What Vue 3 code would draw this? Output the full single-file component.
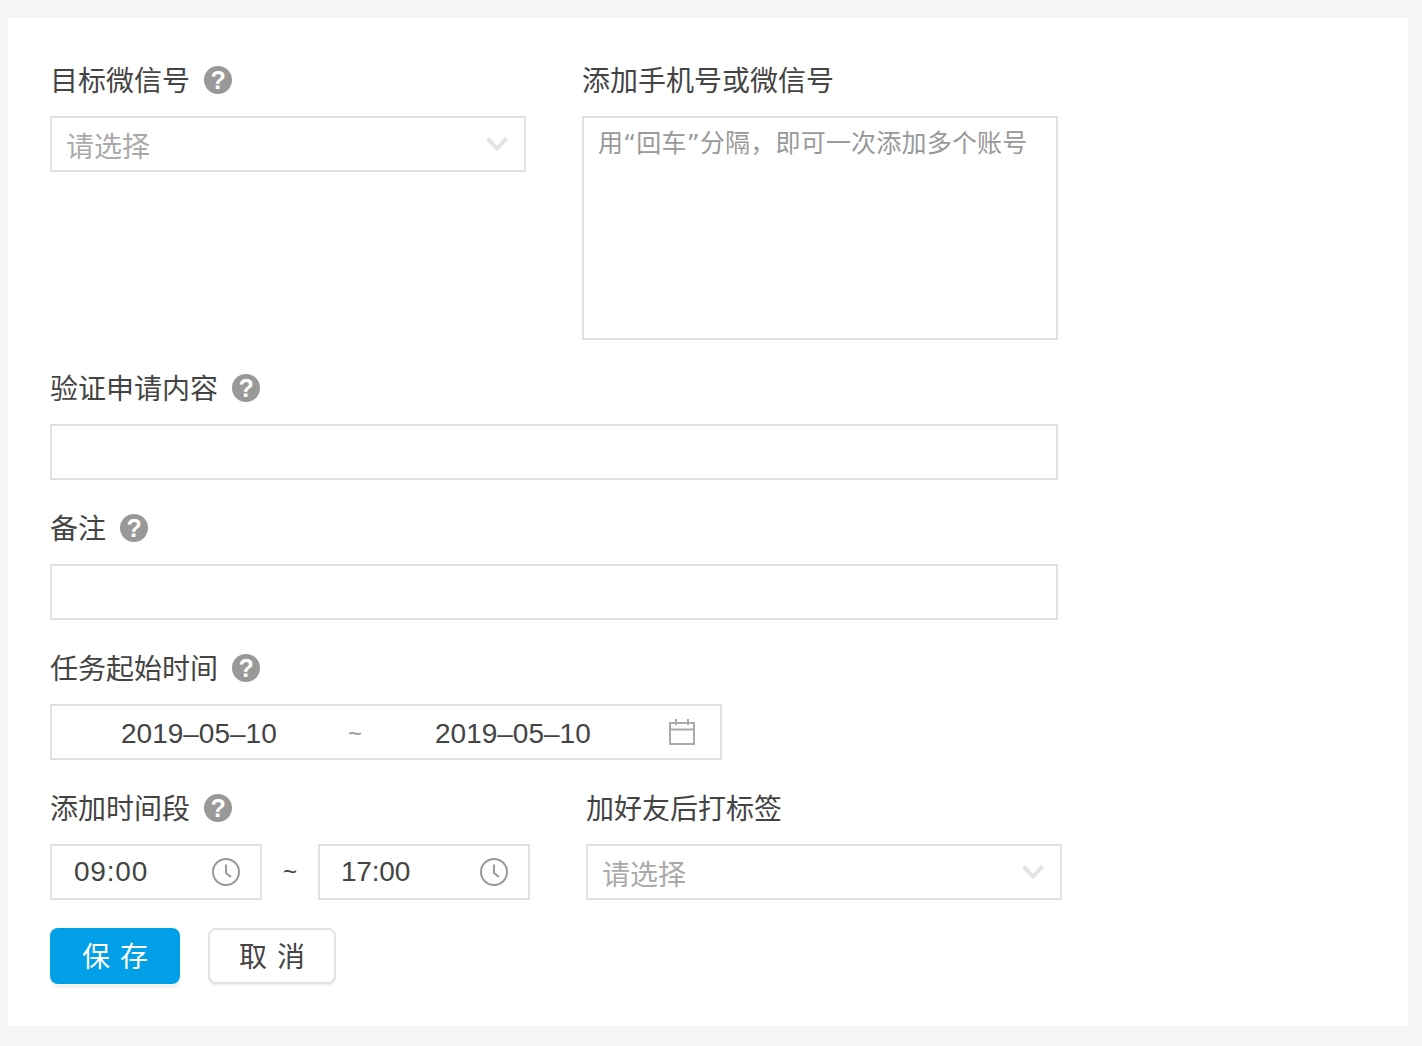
<template>
  <main class="page">
    <form class="card" @submit.prevent>
      <div class="row">
        <div class="col">
          <div class="label"><span class="label-text">目标微信号</span><span class="help">?</span></div>
          <div class="box select">
            <span class="placeholder">请选择</span>
            <svg width="22" height="14" viewBox="0 0 22 14"><path d="M1.500 1.500 11 11.500 20.500 1.500" fill="none" stroke="#e4e4e4" stroke-width="4"/></svg>
          </div>
        </div>
        <div class="col">
          <div class="label"><span class="label-text">添加手机号或微信号</span></div>
          <textarea class="box area" placeholder="用“回车”分隔&#xFF0C;即可一次添加多个账号"></textarea>
        </div>
      </div>

      <div class="col">
        <div class="label"><span class="label-text">验证申请内容</span><span class="help">?</span></div>
        <input class="box wide" type="text" />
      </div>

      <div class="col">
        <div class="label"><span class="label-text">备注</span><span class="help">?</span></div>
        <input class="box wide" type="text" />
      </div>

      <div class="col">
        <div class="label"><span class="label-text">任务起始时间</span><span class="help">?</span></div>
        <div class="box date">
          <span class="date-a">2019–05–10</span>
          <span class="date-sep">~</span>
          <span class="date-b">2019–05–10</span>
          <svg width="26" height="26" viewBox="0 0 26 26" fill="none" stroke="#aaa" stroke-width="2"><rect x="1" y="4" width="24" height="21"/><path d="M1 10.500H25M7 0V6M19 0V6"/></svg>
        </div>
      </div>

      <div class="row">
        <div class="col">
          <div class="label"><span class="label-text">添加时间段</span><span class="help">?</span></div>
          <div class="times">
            <div class="box time">
              <span>09:00</span>
              <svg width="28" height="28" viewBox="0 0 28 28" fill="none" stroke="#999" stroke-width="2"><circle cx="14" cy="14" r="13"/><path d="M14 6.500V15L19 19"/></svg>
            </div>
            <span class="tilde">~</span>
            <div class="box time end">
              <span>17:00</span>
              <svg width="28" height="28" viewBox="0 0 28 28" fill="none" stroke="#999" stroke-width="2"><circle cx="14" cy="14" r="13"/><path d="M14 6.500V15L19 19"/></svg>
            </div>
          </div>
        </div>
        <div class="col">
          <div class="label"><span class="label-text">加好友后打标签</span></div>
          <div class="box select">
            <span class="placeholder">请选择</span>
            <svg width="22" height="14" viewBox="0 0 22 14"><path d="M1.500 1.500 11 11.500 20.500 1.500" fill="none" stroke="#e4e4e4" stroke-width="4"/></svg>
          </div>
        </div>
      </div>

      <div class="actions">
        <button class="btn primary" type="submit">保 存</button>
        <button class="btn ghost" type="button">取 消</button>
      </div>
    </form>
  </main>
</template>

<script setup>
</script>

<style>
html, body { margin: 0; background: #f5f5f5; }
</style>

<style scoped>
.page {
  height: 1046px;
  box-sizing: border-box;
  padding: 18px 14px 20px 8px;
  background: #f5f5f5;
  font-family: "Liberation Sans", "Noto Sans CJK SC", sans-serif;
  color: #444;
  font-size: 28px;
}
.card {
  height: 1008px;
  box-sizing: border-box;
  background: #fff;
  padding: 42px 42px 0;
  display: flex;
  flex-direction: column;
  gap: 28px;
}
.row { display: flex; gap: 56px; }
.col { display: flex; flex-direction: column; gap: 16px; }
.label {
  height: 40px;
  line-height: 40px;
  display: flex;
  align-items: center;
  white-space: nowrap;
}
.label-text { padding-top: 4px; }
.help {
  width: 28px;
  height: 28px;
  margin-left: 14px;
  border-radius: 50%;
  background: #999;
  color: #fff;
  font-size: 25px;
  font-weight: 700;
  line-height: 28px;
  text-align: center;
}
.box {
  box-sizing: border-box;
  height: 56px;
  border: 2px solid #e0e0e0;
  background: #fff;
  display: flex;
  align-items: center;
}
.select { width: 476px; padding: 0 16px 0 14px; justify-content: space-between; }
.placeholder { color: #aaa; padding-top: 2px; }
.area {
  display: block;
  width: 476px;
  height: 224px;
  padding: 8px 14px;
  margin: 0;
  resize: none;
  outline: none;
  border-radius: 0;
  font: 25px/36px "DejaVu Sans", "Noto Sans CJK SC", sans-serif;
  letter-spacing: 0.2px;
  color: #444;
}
.area::placeholder { color: #999; opacity: 1; }
.wide { width: 1008px; outline: none; border-radius: 0; padding: 0 14px; font: inherit; }
.date { width: 672px; padding: 0 25px 0 69px; }
.date-a { width: 227px; padding-top: 4px; }
.date-sep { width: 87px; color: #999; font-size: 24px; padding-top: 4px; }
.date-b { flex: 1; padding-top: 4px; }
.times { display: flex; align-items: center; }
.time {
  width: 212px;
  padding: 0 20px 0 22px;
  justify-content: space-between;
  letter-spacing: 0.8px;
}
.end { padding-left: 21px; letter-spacing: -0.2px; }
.tilde { width: 56px; text-align: center; font-size: 24px; }
.actions { display: flex; gap: 28px; }
.btn {
  height: 56px;
  box-sizing: border-box;
  border-radius: 8px;
  font: 28px/1 "Liberation Sans", "Noto Sans CJK SC", sans-serif;
  word-spacing: 2px;
  padding: 4px 0 0;
}
.primary { width: 130px; border: 0; background: #009fe8; color: #fff; box-shadow: 0 4px 0 #f3f3f3; }
.ghost { width: 128px; border: 2px solid #e3e3e3; background: #fff; color: #444; box-shadow: 0 2px 0 #f3f3f3; }
</style>
